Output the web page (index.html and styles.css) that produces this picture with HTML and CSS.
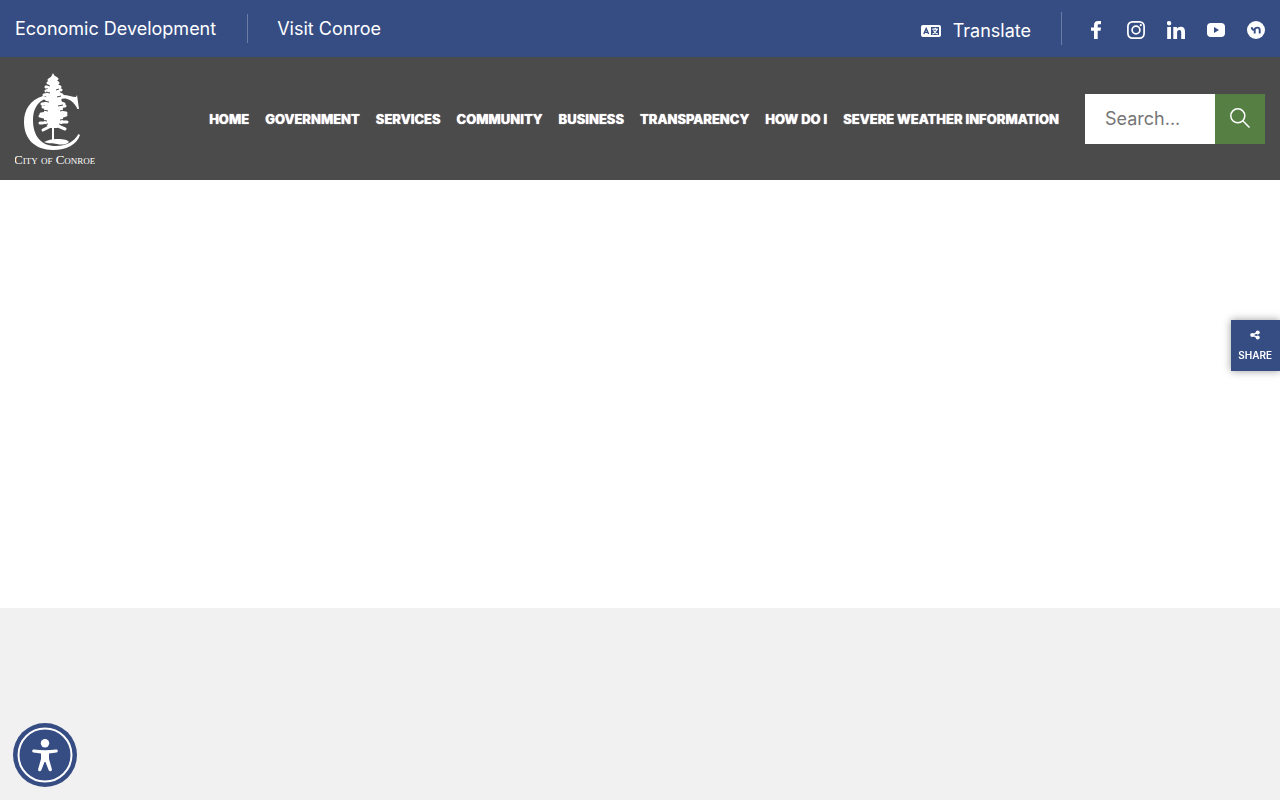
FILE: index.html
```html
<!DOCTYPE html>
<html lang="en">
<head>
  <title>City of Conroe</title>
  <meta charset="utf-8">
  <meta name="viewport" content="width=device-width, initial-scale=1">
  <link rel="stylesheet" href="styles.css">
</head>
<body>
  <header>
    <div class="top-bar">
      <nav class="top-links" aria-label="Departments">
        <a href="#">Economic Development</a>
        <a href="#">Visit Conroe</a>
      </nav>
      <div class="top-tools">
        <button class="translate" type="button">
          <svg width="20" height="12" viewBox="0 0 20 12" aria-hidden="true">
            <rect width="20" height="12" rx="2" fill="currentColor"/>
            <path class="cut" d="M2.800 9L5.200 3.500 7.600 9M3.600 7.400h3.200"/>
            <path fill="#364d84" d="M10 2h8v8h-8z"/>
            <path fill="none" stroke="currentColor" stroke-width="1.200" d="M11.300 4.200h5.600M14.200 2.700v1.500M16 4.400c-.8 2.200-2.100 3.700-4.400 4.700M12.500 5.500c.9 1.800 2 2.900 4.200 3.600"/>
          </svg>
          Translate
        </button>
        <ul class="social">
          <li><a href="#" aria-label="Facebook">
            <svg width="18" height="18" viewBox="1 1 18 18"><path fill="currentColor" d="M8 19v-8.300H5V7.500h3V5c0-2.700 1.600-4 4-4h3v3.200h-1.900c-1 0-1.400.5-1.400 1.400v1.900H15l-.5 3.200h-2.800V19z"/></svg>
          </a></li>
          <li><a href="#" aria-label="Instagram">
            <svg width="18" height="18" viewBox="1 1 18 18" fill="none" stroke="currentColor" stroke-width="1.700"><rect x="1.900" y="1.900" width="16.200" height="16.200" rx="4.500"/><circle cx="10" cy="10" r="3.900"/><circle cx="14.800" cy="5.200" r="1.100" fill="currentColor" stroke="none"/></svg>
          </a></li>
          <li><a href="#" aria-label="LinkedIn">
            <svg width="18" height="18" viewBox="1 1 18 18" fill="currentColor"><circle cx="3.100" cy="3.200" r="2.200"/><path d="M1.200 7h3.800v12H1.200zM7.300 7h3.600v1.700c.7-1.200 2-2 3.700-2 3.500 0 4.400 2.200 4.400 5.300v7h-3.800v-6.200c0-1.600-.2-2.900-1.900-2.900s-2.200 1.200-2.200 2.900V19H7.300z"/></svg>
          </a></li>
          <li><a href="#" aria-label="YouTube">
            <svg width="18" height="18" viewBox="1 1 18 18"><rect x="1" y="3" width="18" height="14" rx="4" fill="currentColor"/><path d="M8 7l5 3-5 3z" fill="#364d84"/></svg>
          </a></li>
          <li><a href="#" aria-label="Nextdoor">
            <svg width="18" height="18" viewBox="1 1 18 18" fill="none"><circle cx="10" cy="10" r="9" fill="currentColor"/><path d="M5.800 7.200c0 1.900.8 2.700 2.900 2.700M8.700 13.500V10c0-1.600 1.100-2.400 2.500-2.400s2.500.9 2.500 2.400v3.500" stroke="#364d84" stroke-width="1.900"/></svg>
          </a></li>
        </ul>
      </div>
    </div>

    <div class="main-bar">
      <a class="logo" href="#" aria-label="City of Conroe">
        <svg width="80" height="94" viewBox="0 0 80 94" fill="#fff" aria-hidden="true">
          <!-- letter C -->
          <path d="M28 24C15 28 9 38 9 50c0 17 11 28 29 28 14 0 24-6 27-15l-1.500-1C59 70 51 74 41 74 26 74 18 64 18 48c0-10 4-17 10-20z"/>
          <path d="M48 23c5 0 9 2 13 2l1-2 2 14-1.500 0C59 30 55 27 48 26z"/>
          <!-- pine -->
          <path d="M38 1l3 6 3 8 2 10 2 12 0 14-6 5h-3v12h-2V56h-3l-5-6 0-13 2-12 2-10 2-8z"/>
          <path class="needles" d="M37 6l-3 2M39 5l3 2M36 10l-3 1M40 9l3 2M36 14l-5 1M40 13l5 2M35 18l-4 1M41 17l5 1M35 22l-6 1M42 21l5 2M34 27l-6-1M42 26l7-1M34 31l-7 1M43 30l6 2M33 36l-5-1M43 35l7-1M33 41l-7 1M44 40l7 1M33 46l-8-2M45 45l6-2M32 51l-7 0M45 50l7 0M34 55l-6 3M43 54l7 3"/>
          <path class="gaps" d="M32 13l3 1M44 17l-3 1M31 20l4 1M46 24l-4 1M28 29l6 1M48 33l-5 1M28 38l5 1M49 38l-4 1M26 48l6 1M51 47l-6 1M28 53l5-1M48 53l-4-1"/>
          <path d="M29 70c4-2 8-3 12-3 5 0 11 0 13 3-3 3-8 3-12 2-4-1-8 0-13-2z"/>
          <text x="-1" y="92">City of Conroe</text>
        </svg>
      </a>
      <nav class="main-nav" aria-label="Main">
        <a href="#">Home</a>
        <a href="#">Government</a>
        <a href="#">Services</a>
        <a href="#">Community</a>
        <a href="#">Business</a>
        <a href="#">Transparency</a>
        <a href="#">How Do I</a>
        <a href="#">Severe Weather Information</a>
      </nav>
      <form class="search">
        <input type="text" placeholder="Search..." aria-label="Search">
        <button type="submit" aria-label="Search">
          <svg width="20" height="20" viewBox="0 0 20 20" fill="none" stroke="currentColor" stroke-width="1.500"><circle cx="7.800" cy="7.800" r="7"/><path d="M12.800 12.800l6.700 6.700"/></svg>
        </button>
      </form>
    </div>
  </header>

  <main></main>
  <footer></footer>

  <button class="share" type="button">
    <svg width="10" height="10" viewBox="0 0 10 10" fill="currentColor" aria-hidden="true"><circle cx="2.200" cy="5" r="2"/><circle cx="7.700" cy="2.400" r="2"/><circle cx="7.700" cy="7.600" r="2"/><path d="M7.700 2.400L2.200 5l5.500 2.600" fill="none" stroke="currentColor" stroke-width="1.500"/></svg>
    Share
  </button>

  <button class="accessibility" type="button" aria-label="Accessibility menu">
    <svg width="64" height="64" viewBox="0 0 64 64" aria-hidden="true">
      <circle cx="32" cy="32" r="32" fill="#364d84"/>
      <circle cx="32" cy="32" r="26.500" fill="none" stroke="#fff" stroke-width="2"/>
      <circle cx="32" cy="20.300" r="4.200" fill="#fff"/>
      <path fill="#fff" d="M21 26.500c7 1 15 1 22 0 2-.3 2.500 2.500.6 3L36 30.500v5.500l2.900 10.300c.5 2-2.400 2.900-3.200 1L32.500 39h-1l-3.200 8.300c-.8 1.900-3.700 1-3.200-1L28 36v-5.500l-7.600-1c-1.900-.5-1.400-3.300.6-3z"/>
    </svg>
  </button>
</body>
</html>
```
FILE: styles.css
```css
*, *::before, *::after {
  margin: 0;
  box-sizing: border-box;
}

body {
  display: flex;
  flex-direction: column;
  min-height: 100vh;
  background-color: #ffffff;
  color: #ffffff;
  font-family: "Inter", sans-serif;
  font-size: 18px;
}

a {
  color: inherit;
  text-decoration: none;
}

button, input {
  border: 0;
  padding: 0;
  font: inherit;
}

button {
  background: none;
  color: inherit;
  cursor: pointer;
}

svg {
  display: block;
}

.top-bar {
  display: flex;
  justify-content: space-between;
  height: 57px;
  padding: 12px 15px;
  background-color: #364d84;
}

.top-links, .top-tools, .social, .translate {
  display: flex;
  align-items: center;
}

.top-links a {
  line-height: 29px;
}

.top-links a + a {
  margin-left: 31px;
  border-left: 1px solid #6b7ca6;
  padding-left: 29px;
}

.translate {
  gap: 12px;
  padding: 4px 30px 0 0;
}

.cut {
  fill: none;
  stroke: #364d84;
  stroke-width: 1.4;
}

.social {
  gap: 22px;
  height: 33px;
  border-left: 1px solid #6b7ca6;
  padding: 3px 0 0 25px;
  list-style: none;
}

.main-bar {
  display: flex;
  align-items: center;
  padding: 15px 15px 14px;
  background-color: #4b4b4b;
}

.logo text {
  font-family: "Liberation Serif", serif;
  font-size: 13px;
  font-variant: small-caps;
}

.needles {
  fill: none;
  stroke: #ffffff;
  stroke-width: 3;
  stroke-linecap: round;
}

.gaps {
  fill: none;
  stroke: #4b4b4b;
  stroke-width: 1;
}

.main-nav {
  display: flex;
  gap: 16px;
  margin-left: auto;
  font-size: 13px;
  font-weight: 800;
  text-shadow: 0 0 1px #ffffff;
  text-transform: uppercase;
  white-space: nowrap;
}

.search {
  display: flex;
  width: 180px;
  height: 50px;
  margin-left: 26px;
}

.search input {
  flex: 1;
  min-width: 0;
  padding: 0 20px 2px;
  background-color: #ffffff;
  color: #333333;
}

.search input::placeholder {
  color: #757575;
}

.search button {
  display: flex;
  align-items: center;
  justify-content: center;
  width: 50px;
  padding-bottom: 2px;
  background-color: #557f43;
}

main {
  flex: 1;
}

footer {
  height: 192px;
  background-color: #f1f1f1;
}

.share {
  position: fixed;
  top: 40%;
  right: 0;
  display: flex;
  flex-direction: column;
  align-items: center;
  gap: 9px;
  padding: 10px 8px 9px 7px;
  background-color: #364d84;
  box-shadow: 0 0 8px rgba(0, 0, 0, 0.4);
  font-size: 10px;
  font-weight: 600;
  line-height: 13px;
  text-transform: uppercase;
}

.accessibility {
  position: fixed;
  bottom: 13px;
  left: 13px;
  border-radius: 50%;
}
```
